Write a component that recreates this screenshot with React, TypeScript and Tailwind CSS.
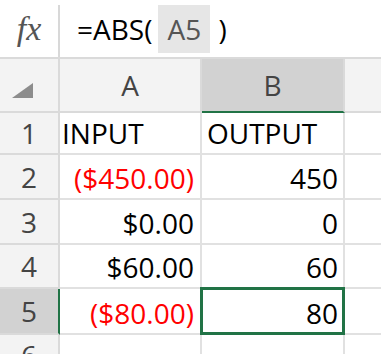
import React from 'react';

const font = { fontFamily: '"Open Sans", "Liberation Sans", sans-serif' };

type Row = { n: number; a: string; b: string; aRed?: boolean; aLeft?: boolean; h: string };

const rows: Row[] = [
  { n: 1, a: 'INPUT', b: 'OUTPUT', aLeft: true, h: 'h-[42px]' },
  { n: 2, a: '($450.00)', b: '450', aRed: true, h: 'h-[45px]' },
  { n: 3, a: '$0.00', b: '0', h: 'h-[45px]' },
  { n: 4, a: '$60.00', b: '60', h: 'h-[44px]' },
  { n: 5, a: '($80.00)', b: '80', aRed: true, h: 'h-[46px]' },
];

export default function App() {
  return (
    <div className="w-[381px] h-[354px] overflow-hidden bg-white text-[28px] leading-none" style={font}>
      {/* formula bar */}
      <div className="flex h-[59px] border-b-2 border-[#dadada]">
        <div className="w-[58px] flex items-center justify-center">
          <span className="text-[34px] italic text-[#555]" style={{ fontFamily: '"Liberation Serif", serif' }}>
            fx
          </span>
        </div>
        <div className="w-[2px] mt-[5px] bg-[#d8d8d8]" />
        <div className="flex items-start pl-[17px] pt-[5px] text-black">
          <span className="h-[48px] flex items-center">=ABS(</span>
          <span className="ml-[6px] h-[48px] w-[52px] bg-[#e6e6e6] text-[#555] flex items-center justify-center">A5</span>
          <span className="ml-[8px] h-[48px] flex items-center">)</span>
        </div>
      </div>

      {/* column headers */}
      <div className="flex h-[54px] bg-[#f3f3f3] text-[#444]">
        <div className="w-[60px] border-r-2 border-b-2 border-[#dadada] flex items-end justify-start pl-[12px] pb-[13px]">
          <svg width="21" height="15" viewBox="0 0 21 15">
            <polygon points="21,0 21,15 0,15" fill="#8c8c8c" />
          </svg>
        </div>
        <div className="w-[142px] border-r-2 border-b-2 border-[#dadada] flex items-center justify-center">A</div>
        <div className="w-[143px] border-r-2 border-[#dadada] border-b-2 border-b-[#217346] bg-[#d2d2d2] flex items-center justify-center">
          B
        </div>
        <div className="flex-1 border-b-2 border-[#dadada]" />
      </div>

      {/* body */}
      {rows.map((r) => {
        const sel = r.n === 5;
        return (
          <div key={r.n} className={`flex ${r.h}`}>
            <div
              className={`w-[60px] border-b-2 border-b-[#dadada] border-r-2 flex items-center justify-center text-[#444] ${
                sel ? 'bg-[#d2d2d2] border-r-[#217346]' : 'bg-[#f3f3f3] border-r-[#dadada]'
              }`}
            >
              {r.n}
            </div>
            <div
              className={`w-[142px] border-r-2 border-b-2 border-[#e1e1e1] flex items-end pb-[6px] ${
                r.aLeft ? 'justify-start pl-[2px]' : 'justify-end pr-[6px]'
              } ${r.aRed ? 'text-[#ff0000]' : 'text-black'}`}
            >
              {r.a}
            </div>
            <div
              className={`relative w-[143px] border-r-2 border-b-2 border-[#e1e1e1] flex items-end pb-[6px] text-black ${
                r.n === 1 ? 'justify-start pl-[5px]' : 'justify-end pr-[5px]'
              }`}
            >
              {r.b}
              {sel && <div className="absolute -left-[2px] -top-[2px] -right-[2px] -bottom-[2px] border-[3px] border-[#217346]" />}
            </div>
            <div className="flex-1 border-b-2 border-[#e1e1e1]" />
          </div>
        );
      })}
      <div className="flex h-[40px]">
        <div className="w-[60px] border-r-2 border-[#dadada] bg-[#f3f3f3] flex items-start justify-center text-[#444] pt-[6px]">
          6
        </div>
        <div className="w-[142px] border-r-2 border-[#e1e1e1]" />
        <div className="w-[143px] border-r-2 border-[#e1e1e1]" />
        <div className="flex-1" />
      </div>
    </div>
  );
}
